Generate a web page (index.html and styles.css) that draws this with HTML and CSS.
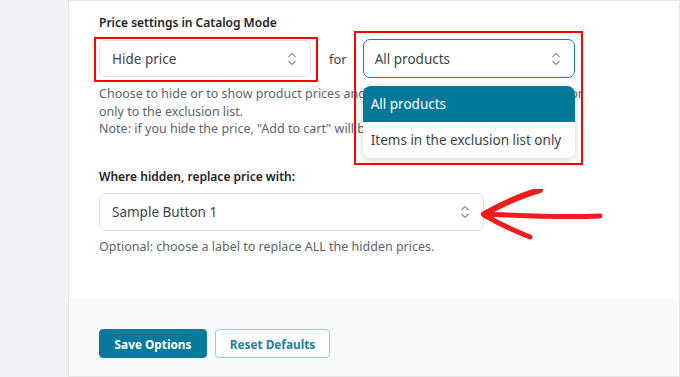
FILE: index.html
```html
<!DOCTYPE html>
<html>
<head>
<meta charset="utf-8">
<title>Catalog Mode</title>
<link rel="stylesheet" href="styles.css">
</head>
<body>
<div class="layout">
  <div class="sidebar"></div>
  <div class="panel">
    <div class="content">
      <div class="field-label">Price settings in Catalog Mode</div>
      <div class="select-row">
        <div class="select">
          <span>Hide price</span>
          <svg class="chevrons" width="10" height="14" viewBox="0 0 10 14"><path d="M1.5 5L5 1.5L8.5 5M1.5 9L5 12.5L8.5 9" fill="none" stroke="#8c8f94" stroke-width="1.2"/></svg>
          <div class="mark mark-hide"></div>
        </div>
        <span class="for">for</span>
        <div class="select select-open">
          <span>All products</span>
          <svg class="chevrons" width="10" height="14" viewBox="0 0 10 14"><path d="M1.5 5L5 1.5L8.5 5M1.5 9L5 12.5L8.5 9" fill="none" stroke="#8c8f94" stroke-width="1.2"/></svg>
          <ul class="menu">
            <li class="menu-item active">All products</li>
            <li class="menu-item">Items in the exclusion list only</li>
          </ul>
          <div class="mark mark-scope"></div>
        </div>
      </div>
      <p class="help">Choose to hide or to show product prices and whether to apply it to all products or<br>only to the exclusion list.<br>Note: if you hide the price, "Add to cart" will be hidden as well.</p>

      <div class="field-label second">Where hidden, replace price with:</div>
      <div class="select select-wide">
        <span>Sample Button 1</span>
        <svg class="chevrons" width="10" height="14" viewBox="0 0 10 14"><path d="M1.5 5L5 1.5L8.5 5M1.5 9L5 12.5L8.5 9" fill="none" stroke="#8c8f94" stroke-width="1.2"/></svg>
        <svg class="arrow" width="130" height="60" viewBox="0 0 130 60">
          <path d="M8 25 C 40 26, 80 29, 124 27" fill="none" stroke="#ee1c1c" stroke-width="5" stroke-linecap="round"/>
          <path d="M64 1 C 46 6, 26 15, 8 25" fill="none" stroke="#ee1c1c" stroke-width="6" stroke-linecap="round"/>
          <path d="M8 26 C 22 34, 38 42, 54 48" fill="none" stroke="#ee1c1c" stroke-width="5" stroke-linecap="round"/>
        </svg>
      </div>
      <p class="help">Optional: choose a label to replace ALL the hidden prices.</p>
    </div>
    <div class="footer">
      <button class="btn btn-primary">Save Options</button>
      <button class="btn btn-secondary">Reset Defaults</button>
    </div>
  </div>
</div>
</body>
</html>
```

FILE: styles.css
```css
html, body { margin: 0; padding: 0; background: #f0f2f6; font-family: "Noto Sans", "Open Sans", sans-serif; color: #3c434a; }
.layout { display: flex; height: 377px; }
.sidebar { width: 68px; flex: none; }
.panel { flex: 1; display: flex; flex-direction: column; background: #fff; border: 1px solid #e3e5e8; }
.content { height: 297px; box-sizing: border-box; padding: 13px 0 0 30px; }
.field-label { font-size: 12px; font-weight: 600; color: #1d2327; line-height: 18px; margin-bottom: 7px; }
.field-label.second { margin-top: 30px; margin-bottom: 7px; }
.select-row { display: flex; align-items: center; }
.select { position: relative; box-sizing: border-box; width: 212px; height: 37px; border: 1px solid #dcdfe5; border-radius: 7px; background: #fff; display: flex; align-items: center; justify-content: space-between; padding: 0 13px 0 12px; font-size: 13.5px; color: #3c434a; }
.select-open { border: 1.5px solid #1f7fa0; height: 39px; padding-left: 11px; }
.select-wide { width: 385px; height: 38px; }
.chevrons { flex: none; }
.for { font-size: 13px; margin: 0 16px 0 18px; color: #3c434a; }
.help { margin: 7px 0 0; font-size: 12.5px; line-height: 17.5px; color: #5c636b; }
.menu { position: absolute; left: -1px; top: 46px; width: 212px; margin: 0; padding: 0; list-style: none; background: #fff; border-radius: 8px; box-shadow: 0 2px 8px rgba(0, 0, 0, 0.18); overflow: hidden; z-index: 2; }
.menu-item { height: 36px; line-height: 36px; padding-left: 8px; font-size: 13.5px; color: #3c434a; }
.menu-item.active { background: #02789b; color: #fff; }
.mark { position: absolute; border: 2px solid #f00; z-index: 3; }
.mark-hide { left: -6px; top: -4px; right: -8px; bottom: -6px; }
.mark-scope { left: -10px; top: -9px; right: -9px; bottom: -88px; }
.arrow { position: absolute; left: 376px; top: -5px; }
.footer { flex: 1; background: #f8f9fb; padding: 31px 0 0 30px; display: flex; align-items: flex-start; gap: 8px; }
.btn { font-family: inherit; font-size: 11.8px; font-weight: 700; height: 29px; border-radius: 4px; padding: 0; white-space: nowrap; cursor: pointer; }
.btn-primary { background: #07799b; border: 1px solid #07799b; color: #fff; width: 108px; }
.btn-secondary { background: #fff; border: 1px solid #8fcde0; color: #1a7fa0; width: 115px; }
```
